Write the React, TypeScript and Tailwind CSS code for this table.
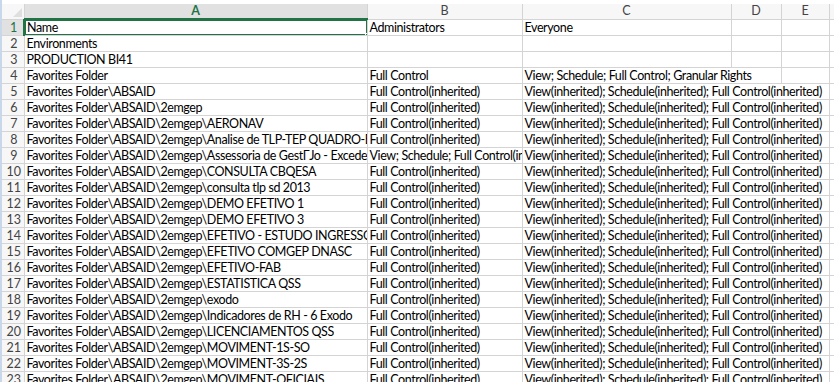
import React from 'react';

type Row = {
  a: string;
  b?: string;
  c?: string;
  // how many columns the C text runs over (C, D, E)
  cSpan?: number;
};

const FAV = 'Favorites Folder\\ABSAID\\2emgep\\';
const ADM = 'Full Control(inherited)';
const EVR = 'View(inherited); Schedule(inherited); Full Control(inherited)';

const rows: Row[] = [
  { a: 'Name', b: 'Administrators', c: 'Everyone' },
  { a: 'Environments' },
  { a: 'PRODUCTION BI41' },
  { a: 'Favorites Folder', b: 'Full Control', c: 'View; Schedule; Full Control; Granular Rights', cSpan: 2 },
  { a: 'Favorites Folder\\ABSAID', b: ADM, c: EVR, cSpan: 3 },
  { a: 'Favorites Folder\\ABSAID\\2emgep', b: ADM, c: EVR, cSpan: 3 },
  { a: FAV + 'AERONAV', b: ADM, c: EVR, cSpan: 3 },
  { a: FAV + 'Analise de TLP-TEP QUADRO-ESPECIAL', b: ADM, c: EVR, cSpan: 3 },
  { a: FAV + 'Assessoria de GestΓJo - Excedentes', b: 'View; Schedule; Full Control(inherited)', c: EVR, cSpan: 3 },
  { a: FAV + 'CONSULTA CBQESA', b: ADM, c: EVR, cSpan: 3 },
  { a: FAV + 'consulta tlp sd 2013', b: ADM, c: EVR, cSpan: 3 },
  { a: FAV + 'DEMO EFETIVO 1', b: ADM, c: EVR, cSpan: 3 },
  { a: FAV + 'DEMO EFETIVO 3', b: ADM, c: EVR, cSpan: 3 },
  { a: FAV + 'EFETIVO - ESTUDO INGRESSOS', b: ADM, c: EVR, cSpan: 3 },
  { a: FAV + 'EFETIVO COMGEP DNASC', b: ADM, c: EVR, cSpan: 3 },
  { a: FAV + 'EFETIVO-FAB', b: ADM, c: EVR, cSpan: 3 },
  { a: FAV + 'ESTATISTICA QSS', b: ADM, c: EVR, cSpan: 3 },
  { a: FAV + 'exodo', b: ADM, c: EVR, cSpan: 3 },
  { a: FAV + 'Indicadores de RH - 6 Exodo', b: ADM, c: EVR, cSpan: 3 },
  { a: FAV + 'LICENCIAMENTOS QSS', b: ADM, c: EVR, cSpan: 3 },
  { a: FAV + 'MOVIMENT-1S-SO', b: ADM, c: EVR, cSpan: 3 },
  { a: FAV + 'MOVIMENT-3S-2S', b: ADM, c: EVR, cSpan: 3 },
  { a: FAV + 'MOVIMENT-OFICIAIS', b: ADM, c: EVR, cSpan: 3 },
];

const cell = 'h-[15px] p-0 pl-[2px] border-r border-b border-[#d4d4d4] overflow-hidden whitespace-nowrap align-bottom leading-[15px] tracking-[-0.4px]';
const colHead = 'h-[15px] p-0 border-r border-b border-[#d4d4d4] bg-[#f7f7f7] text-[#444] text-center font-normal leading-[14px]';

function Sheet() {
  return (
    <table className="table-fixed border-collapse text-[12.5px] text-black" style={{ width: 832 }}>
      <colgroup>
        <col className="w-[22px]" />
        <col className="w-[343px]" />
        <col className="w-[155px]" />
        <col className="w-[209px]" />
        <col className="w-[50px]" />
        <col className="w-[48px]" />
        <col className="w-[5px]" />
      </colgroup>
      <thead>
        <tr>
          {/* select-all corner with the little triangle */}
          <th className="h-[15px] p-0 border-r border-b border-[#d4d4d4] bg-[#f7f7f7] relative">
            <span className="absolute right-[2px] bottom-[2px] w-0 h-0 border-l-[9px] border-l-transparent border-b-[9px] border-b-[#dfdfdf]" />
          </th>
          <th className="h-[15px] p-0 border-r border-[#d4d4d4] border-b-2 border-b-[#217346] bg-[#e1e1e1] text-[#217346] font-bold text-center leading-[14px]">A</th>
          <th className={colHead}>B</th>
          <th className={colHead}>C</th>
          <th className={colHead}>D</th>
          <th className={colHead}>E</th>
          <th className="p-0 border-b border-[#d4d4d4] bg-[#f7f7f7]" />
        </tr>
      </thead>
      <tbody>
        {rows.map((r, i) => {
          const n = i + 1;
          const span = r.cSpan ?? 1;
          const selected = n === 1;
          return (
            <tr key={n}>
              <td
                className={
                  selected
                    ? 'h-[15px] p-0 pl-[2px] border-b border-[#d4d4d4] border-r-2 border-r-[#217346] bg-[#e1e1e1] text-[#217346] text-center leading-[15px]'
                    : 'h-[15px] p-0 pl-[2px] border-r border-b border-[#d4d4d4] bg-[#f7f7f7] text-[#444] text-center leading-[15px]'
                }
              >
                {n}
              </td>
              <td className={selected ? cell + ' relative' : cell}>
                {r.a}
                {selected && (
                  <>
                    <span className="absolute -inset-[1px] border-2 border-[#217346] pointer-events-none" />
                    <span className="absolute -right-[3px] -bottom-[3px] w-[5px] h-[5px] bg-[#217346] border border-white" />
                  </>
                )}
              </td>
              <td className={cell}>{r.b ?? ''}</td>
              <td className={cell} colSpan={span}>
                {r.c ?? ''}
              </td>
              {span < 2 && <td className={cell} />}
              {span < 3 && <td className={cell} />}
              <td className="p-0 border-b border-[#d4d4d4]" />
            </tr>
          );
        })}
      </tbody>
    </table>
  );
}

export default function App() {
  return (
    <div className="w-[834px] h-[382px] overflow-hidden bg-white flex" style={{ fontFamily: 'Lato, "Open Sans", sans-serif' }}>
      {/* thin frame edge on the left of the grid */}
      <div className="w-[2px] shrink-0 bg-[#c9d7ea]" />
      <div className="flex flex-col">
        <div className="h-[4px] shrink-0 bg-white" />
        <Sheet />
      </div>
    </div>
  );
}
